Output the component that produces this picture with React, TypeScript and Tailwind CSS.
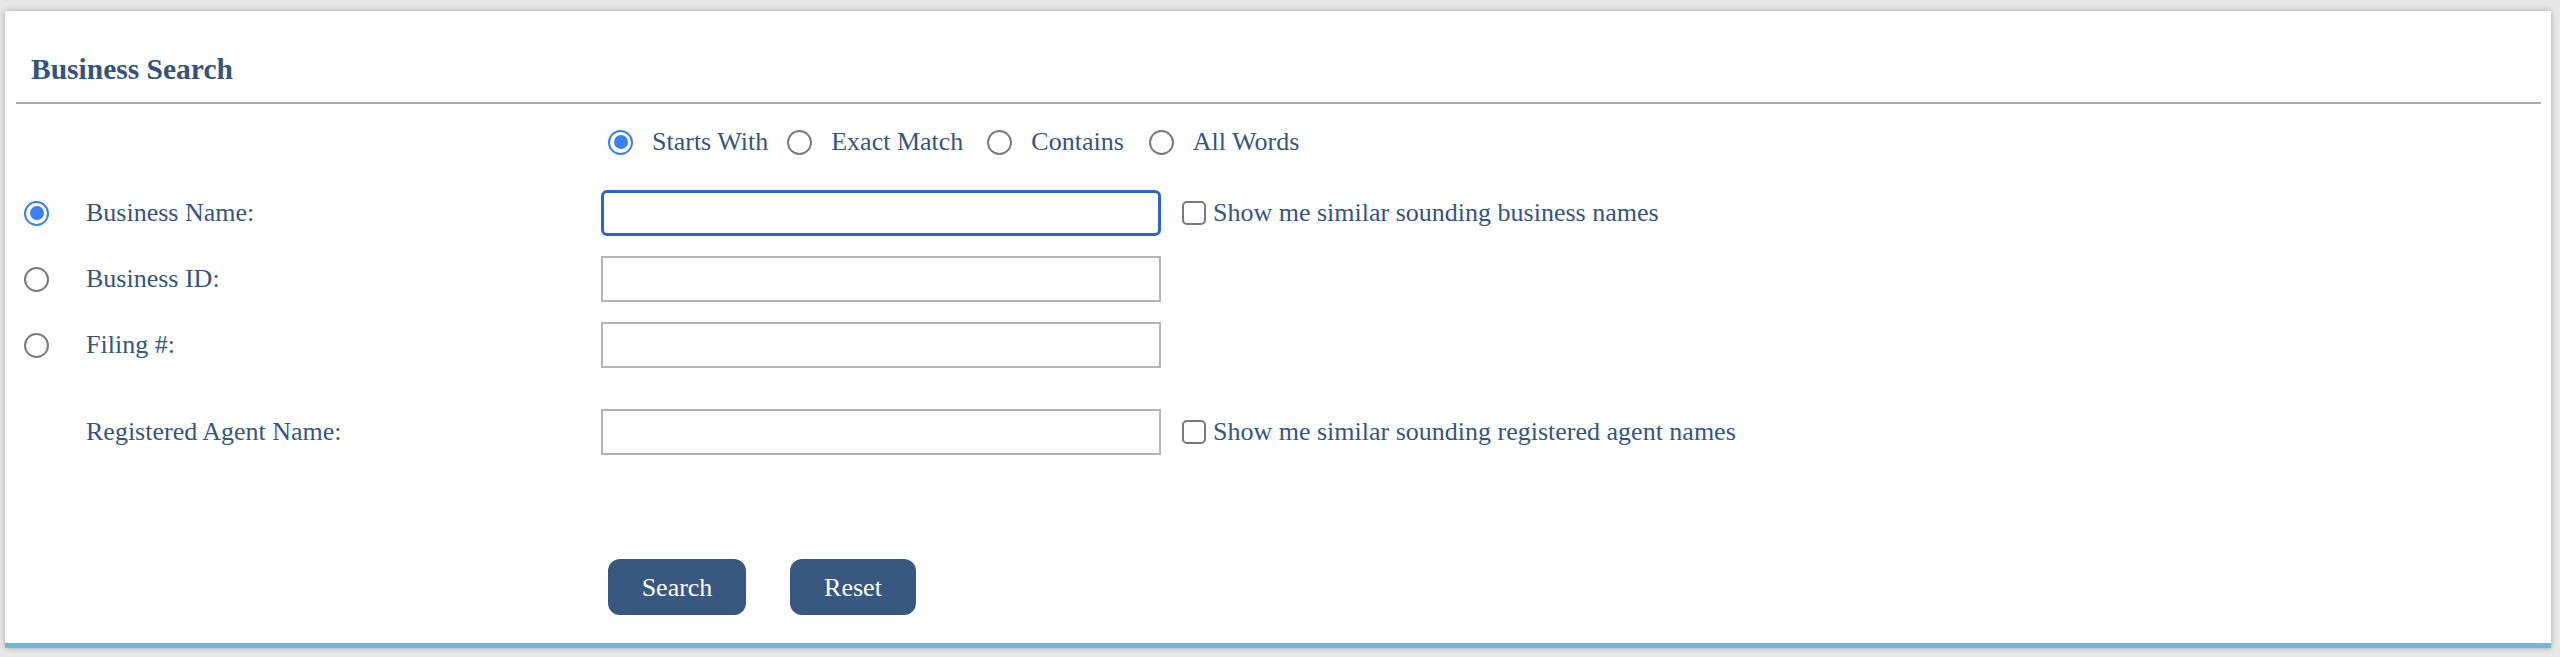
import { useState } from 'react'

type MatchMode = 'starts' | 'exact' | 'contains' | 'all'
type SearchBy = 'name' | 'id' | 'filing'

const matchModes: { key: MatchMode; label: string; gap: string }[] = [
  { key: 'starts', label: 'Starts With', gap: '' },
  { key: 'exact', label: 'Exact Match', gap: 'ml-[19px]' },
  { key: 'contains', label: 'Contains', gap: 'ml-[24px]' },
  { key: 'all', label: 'All Words', gap: 'ml-[25px]' },
]

function Radio({ checked, onClick }: { checked: boolean; onClick?: () => void }) {
  return (
    <span
      onClick={onClick}
      className={
        checked
          ? 'flex h-[25px] w-[25px] shrink-0 cursor-pointer items-center justify-center rounded-full border-[2.5px] border-[#3b7ef6] bg-white'
          : 'flex h-[25px] w-[25px] shrink-0 cursor-pointer items-center justify-center rounded-full border-2 border-[#7a7a7a] bg-white'
      }
    >
      {checked && <span className="h-[14px] w-[14px] rounded-full bg-[#3b7ef6]" />}
    </span>
  )
}

function Checkbox({ checked, onClick }: { checked: boolean; onClick: () => void }) {
  return (
    <span
      onClick={onClick}
      className="flex h-[24px] w-[24px] shrink-0 cursor-pointer items-center justify-center rounded-[5px] border-2 border-[#7a7a7a] bg-white text-[16px] leading-none text-[#3b7ef6]"
    >
      {checked ? '✓' : ''}
    </span>
  )
}

export default function App() {
  const [mode, setMode] = useState<MatchMode>('starts')
  const [searchBy, setSearchBy] = useState<SearchBy>('name')
  const [similarName, setSimilarName] = useState(false)
  const [similarAgent, setSimilarAgent] = useState(false)

  const rows: { key: SearchBy; label: string }[] = [
    { key: 'name', label: 'Business Name:' },
    { key: 'id', label: 'Business ID:' },
    { key: 'filing', label: 'Filing #:' },
  ]

  return (
    <div className="min-h-screen bg-[#e8e8e8] pb-[8px] pl-[5px] pr-[9px] pt-[11px] font-['Liberation_Serif',serif] text-[#36557f]">
      <div className="border-b-[5px] border-[#6cbad6] bg-white pb-[28px] shadow-[0_0_6px_rgba(0,0,0,0.28)]">
        <div className="pl-[26px] pt-[41px]">
          <h1 className="text-[29.5px] font-bold leading-[34px] text-[#34547f]">Business Search</h1>
        </div>
        <div className="ml-[11px] mr-[10px] mt-[16px] h-[2px] bg-[#a9a9a9]" />

        {/* match mode */}
        <div className="ml-[603px] mt-[23px] flex h-[30px] items-center text-[26px] leading-[30px]">
          {matchModes.map((m) => (
            <div key={m.key} className={`flex items-center ${m.gap}`}>
              <Radio checked={mode === m.key} onClick={() => setMode(m.key)} />
              <span className="ml-[19px] whitespace-nowrap">{m.label}</span>
            </div>
          ))}
        </div>

        <div className="mt-[33px] flex flex-col text-[26px] leading-[30px]">
          {rows.map((r, i) => (
            <div key={r.key} className={i === 0 ? 'flex h-[46px] items-center' : 'mt-[20px] flex h-[46px] items-center'}>
              <div className="w-[81px] pl-[19px]">
                <Radio checked={searchBy === r.key} onClick={() => setSearchBy(r.key)} />
              </div>
              <div className="w-[515px] whitespace-nowrap">{r.label}</div>
              <input
                className={
                  searchBy === r.key
                    ? 'h-[46px] w-[560px] rounded-[6px] border-[3px] border-[#2c64c8] bg-white px-2 outline-none'
                    : 'h-[46px] w-[560px] border-2 border-[#b4b4b4] bg-white px-2 outline-none'
                }
              />
              {r.key === 'name' && (
                <>
                  <div className="ml-[21px]">
                    <Checkbox checked={similarName} onClick={() => setSimilarName(!similarName)} />
                  </div>
                  <span className="ml-[7px] whitespace-nowrap">Show me similar sounding business names</span>
                </>
              )}
            </div>
          ))}

          <div className="mt-[41px] flex h-[46px] items-center">
            <div className="w-[81px]" />
            <div className="w-[515px] whitespace-nowrap">Registered Agent Name:</div>
            <input className="h-[46px] w-[560px] border-2 border-[#b4b4b4] bg-white px-2 outline-none" />
            <div className="ml-[21px]">
              <Checkbox checked={similarAgent} onClick={() => setSimilarAgent(!similarAgent)} />
            </div>
            <span className="ml-[7px] whitespace-nowrap">Show me similar sounding registered agent names</span>
          </div>
        </div>

        <div className="ml-[603px] mt-[104px] flex">
          <button className="h-[56px] w-[138px] rounded-[12px] bg-[#38587f] text-[26px] text-white">Search</button>
          <button className="ml-[44px] h-[56px] w-[126px] rounded-[12px] bg-[#38587f] text-[26px] text-white">Reset</button>
        </div>
      </div>
    </div>
  )
}
